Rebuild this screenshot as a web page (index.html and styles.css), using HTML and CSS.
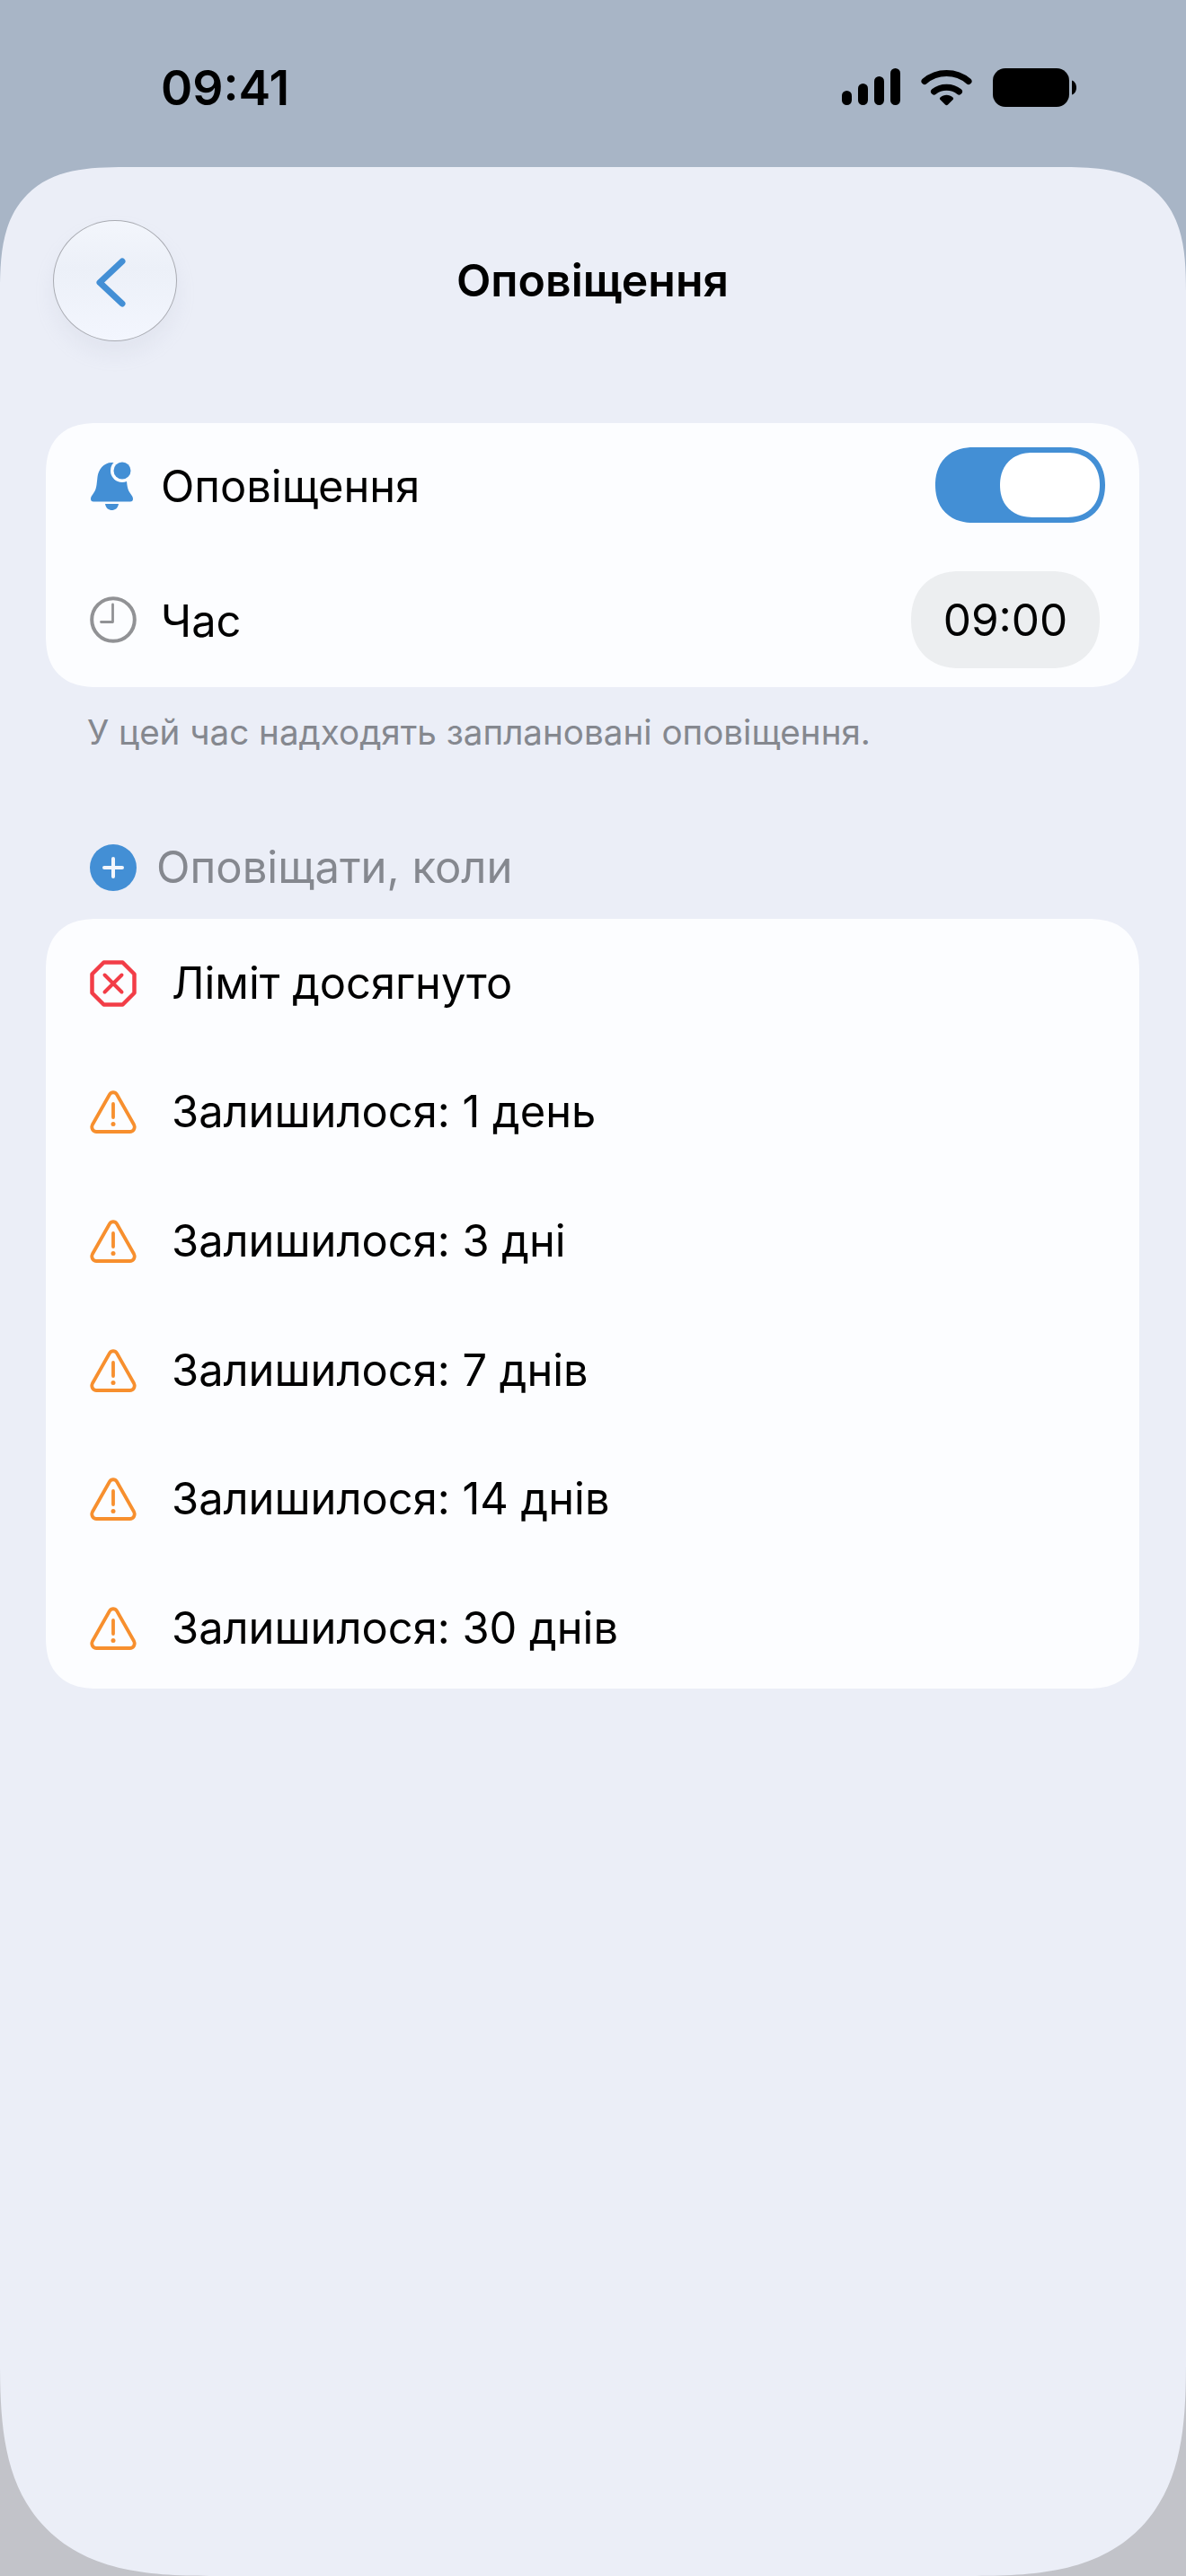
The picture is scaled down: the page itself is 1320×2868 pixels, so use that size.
FILE: index.html
```html
<!DOCTYPE html>
<html lang="uk">
<head>
<meta charset="utf-8">
<title>Оповіщення</title>
<link rel="stylesheet" href="styles.css">
</head>
<body>
<div class="phone">
  <div class="status">
    <span class="clock-text">09:41</span>
    <div class="status-icons">
      <svg class="i-signal" viewBox="0 0 65 41"><rect x="0" y="25" width="11" height="16" rx="5.5"/><rect x="18" y="17" width="11" height="24" rx="5.5"/><rect x="36" y="9" width="11" height="32" rx="5.5"/><rect x="54" y="0" width="11" height="41" rx="5.5"/></svg>
      <svg class="i-wifi" viewBox="0 0 57 42"><path d="M4 14.5C18 2.5 39 2.5 53 14.5" fill="none" stroke="#000" stroke-width="7" stroke-linecap="round"/><path d="M14.5 26C22 19.5 35 19.5 42.5 26" fill="none" stroke="#000" stroke-width="7" stroke-linecap="round"/><path d="M21.5 32.5C25.5 28.7 31.5 28.7 35.5 32.5C36.3 33.3 36.3 34.2 35.5 35L30 40.5C29 41.5 28 41.5 27 40.5L21.5 35C20.7 34.2 20.7 33.3 21.5 32.5Z"/></svg>
      <svg class="i-battery" viewBox="0 0 93 43"><rect x="0" y="0" width="85" height="43" rx="14"/><path d="M88 13.5C91 14.5 93 17.5 93 21.5C93 25.500 91 28.500 88 29.500Z"/></svg>
    </div>
  </div>
  <main class="sheet">
    <header class="nav">
      <button class="back" type="button" aria-label="Назад">
        <svg viewBox="0 0 33 55"><path d="M29 4L4 27.500L29 51" fill="none" stroke="#438fd5" stroke-width="7" stroke-linecap="round" stroke-linejoin="round"/></svg>
      </button>
      <h1 class="title">Оповіщення</h1>
    </header>

    <section class="card card-top">
      <div class="row row-toggle">
        <svg class="icon-bell" viewBox="0 0 52 54"><path fill="#438fd5" d="M24.500 1C15 1 9.500 9 8.500 17C7.500 26 7.500 31 3.500 36C2 38 1 39.500 1 41.500C1 43.200 2 44.500 4 44.500H45C47 44.500 48 43.200 48 41.500C48 39.500 47 38 45.500 36C41.500 31 41.500 26 40.500 17C39.500 9 34 1 24.500 1Z"/><circle cx="36" cy="10" r="13" fill="#fcfdff"/><circle cx="36" cy="10" r="9.500" fill="#438fd5"/><path fill="#438fd5" d="M17 47H32C31 52 28 54 24.500 54C21 54 18 52 17 47Z"/></svg>
        <span class="label label-top">Оповіщення</span>
        <div class="toggle"><span class="knob"></span></div>
      </div>
      <div class="row row-time">
        <svg class="icon" viewBox="0 0 52 52"><circle cx="26" cy="26" r="23.800" fill="none" stroke="#919295" stroke-width="4"/><path d="M25.500 9V28.500H12.500" fill="none" stroke="#919295" stroke-width="2.800" stroke-linecap="round" stroke-linejoin="round"/></svg>
        <span class="label label-top">Час</span>
        <span class="pill">09:00</span>
      </div>
    </section>
    <p class="caption">У цей час надходять заплановані оповіщення.</p>

    <div class="section-head">
      <svg class="icon" viewBox="0 0 52 52"><circle cx="26" cy="26" r="26" fill="#438fd5"/><path d="M26 16V36M16 26H36" stroke="#f3f6fc" stroke-width="4" stroke-linecap="round"/></svg>
      <span class="section-title">Оповіщати, коли</span>
    </div>

    <section class="card card-list">
      <div class="item">
        <svg class="icon" viewBox="0 0 52 52"><path d="M15.500 2.500H36.500L49.500 15.500V36.500L36.500 49.500H15.500L2.500 36.500V15.500Z" fill="none" stroke="#f23d47" stroke-width="4.500" stroke-linejoin="round"/><path d="M16.500 16.500L35.500 35.500M35.500 16.500L16.500 35.500" stroke="#f23d47" stroke-width="4" stroke-linecap="round"/></svg>
        <span class="label">Ліміт досягнуто</span>
      </div>
      <div class="item">
        <svg class="icon" viewBox="0 0 52 48"><path d="M22 4.500C24 1.500 28 1.500 30 4.500L49 38C51 42 48.500 46 44.500 46H7.500C3.500 46 1 42 3 38Z" fill="none" stroke="#f78f2e" stroke-width="3.800" stroke-linejoin="round"/><path d="M26 15V30" stroke="#f78f2e" stroke-width="3.800" stroke-linecap="round"/><circle cx="26" cy="37.500" r="2.500" fill="#f78f2e"/></svg>
        <span class="label">Залишилося: 1 день</span>
      </div>
      <div class="item">
        <svg class="icon" viewBox="0 0 52 48"><path d="M22 4.500C24 1.500 28 1.500 30 4.500L49 38C51 42 48.500 46 44.500 46H7.500C3.500 46 1 42 3 38Z" fill="none" stroke="#f78f2e" stroke-width="3.800" stroke-linejoin="round"/><path d="M26 15V30" stroke="#f78f2e" stroke-width="3.800" stroke-linecap="round"/><circle cx="26" cy="37.500" r="2.500" fill="#f78f2e"/></svg>
        <span class="label">Залишилося: 3 дні</span>
      </div>
      <div class="item">
        <svg class="icon" viewBox="0 0 52 48"><path d="M22 4.500C24 1.500 28 1.500 30 4.500L49 38C51 42 48.500 46 44.500 46H7.500C3.500 46 1 42 3 38Z" fill="none" stroke="#f78f2e" stroke-width="3.800" stroke-linejoin="round"/><path d="M26 15V30" stroke="#f78f2e" stroke-width="3.800" stroke-linecap="round"/><circle cx="26" cy="37.500" r="2.500" fill="#f78f2e"/></svg>
        <span class="label">Залишилося: 7 днів</span>
      </div>
      <div class="item">
        <svg class="icon" viewBox="0 0 52 48"><path d="M22 4.500C24 1.500 28 1.500 30 4.500L49 38C51 42 48.500 46 44.500 46H7.500C3.500 46 1 42 3 38Z" fill="none" stroke="#f78f2e" stroke-width="3.800" stroke-linejoin="round"/><path d="M26 15V30" stroke="#f78f2e" stroke-width="3.800" stroke-linecap="round"/><circle cx="26" cy="37.500" r="2.500" fill="#f78f2e"/></svg>
        <span class="label">Залишилося: 14 днів</span>
      </div>
      <div class="item">
        <svg class="icon" viewBox="0 0 52 48"><path d="M22 4.500C24 1.500 28 1.500 30 4.500L49 38C51 42 48.500 46 44.500 46H7.500C3.500 46 1 42 3 38Z" fill="none" stroke="#f78f2e" stroke-width="3.800" stroke-linejoin="round"/><path d="M26 15V30" stroke="#f78f2e" stroke-width="3.800" stroke-linecap="round"/><circle cx="26" cy="37.500" r="2.500" fill="#f78f2e"/></svg>
        <span class="label">Залишилося: 30 днів</span>
      </div>
    </section>
  </main>
</div>
</body>
</html>
```

FILE: styles.css
```css
* { box-sizing: border-box; }
html, body { margin: 0; padding: 0; }
body { font-family: Inter, "Noto Sans", sans-serif; color: #000; }

.phone {
  width: 1320px;
  height: 2868px;
  display: flex;
  flex-direction: column;
  overflow: hidden;
  background: linear-gradient(180deg, #a8b5c6 0, #a8b5c6 400px, #c2c3c9 2500px);
}

.status {
  height: 186px;
  flex: none;
  display: flex;
  align-items: flex-start;
  justify-content: space-between;
  padding: 66px 122px 0 179px;
}
.clock-text { font-size: 53.5px; line-height: 64px; font-weight: 600; letter-spacing: 0; }
.status-icons { display: flex; align-items: flex-start; padding-top: 10px; }
.i-signal { width: 65px; height: 41px; margin-right: 23px; }
.i-wifi { width: 57px; height: 42px; margin-right: 23px; }
.i-battery { width: 93px; height: 43px; }

.sheet {
  flex: 1;
  background: #ebeef7;
  border-radius: 140px 140px 240px 240px;
  corner-shape: superellipse(1.5);
  padding: 0 52px 0 51px;
}

.nav {
  height: 285px;
  position: relative;
  display: flex;
  justify-content: center;
  align-items: flex-start;
}
.back {
  position: absolute;
  left: 8px;
  top: 59px;
  width: 138px;
  height: 135px;
  padding: 0;
  border: 1.5px solid #a9abb2;
  border-radius: 50%;
  background: linear-gradient(180deg, #f3f6fc 0, #ecf0f8 40%, #f3f6fe 100%);
  box-shadow: 0 14px 22px rgba(170, 176, 195, 0.14);
  display: flex;
  align-items: center;
  justify-content: center;
}
.back svg { width: 33px; height: 55px; margin-left: -9px; margin-top: 3px; }
.title {
  margin: 98px 0 0;
  font-size: 50px;
  line-height: 56px;
  font-weight: 600;
}

.card { background: #fcfdff; border-radius: 58px; corner-shape: superellipse(1.3); width: 1217px; }
.card-top { height: 294px; padding: 0 44px 0 49px; }
.row { display: flex; align-items: center; }
.row-toggle { height: 138px; }
.row-time { height: 156px; padding-top: 6px; }
.icon { width: 52px; height: 52px; flex: none; }
.icon-bell { width: 52px; height: 54px; flex: none; margin-top: 2px; }
.label { font-size: 48.8px; line-height: 56px; }
.label-top { margin-left: 27px; flex: 1; padding-top: 3px; }

.toggle {
  width: 189px;
  height: 84px;
  margin-right: -6px;
  border-radius: 42px;
  corner-shape: superellipse(1.15);
  background: #438fd5;
  padding: 6px;
  display: flex;
  justify-content: flex-end;
}
.knob { width: 111px; height: 72px; border-radius: 36px; corner-shape: superellipse(1.15); background: #fff; }
.pill {
  width: 210px;
  height: 108px;
  border-radius: 54px;
  corner-shape: superellipse(1.15);
  background: #eceef0;
  display: flex;
  align-items: center;
  justify-content: center;
  font-size: 49.5px;
  line-height: 56px;
}

.caption {
  margin: 28px 0 0 46px;
  font-size: 38.6px;
  line-height: 44px;
  color: #85888f;
}

.section-head {
  display: flex;
  align-items: center;
  margin: 103px 0 0 49px;
  height: 52px;
}
.section-title { margin-left: 22px; font-size: 49px; line-height: 56px; color: #85888f; }

.card-list { margin-top: 31px; height: 857px; padding: 0 0 0 49px; }
.item { height: 143.600px; display: flex; align-items: center; }
.item .label { margin-left: 39px; }
```
